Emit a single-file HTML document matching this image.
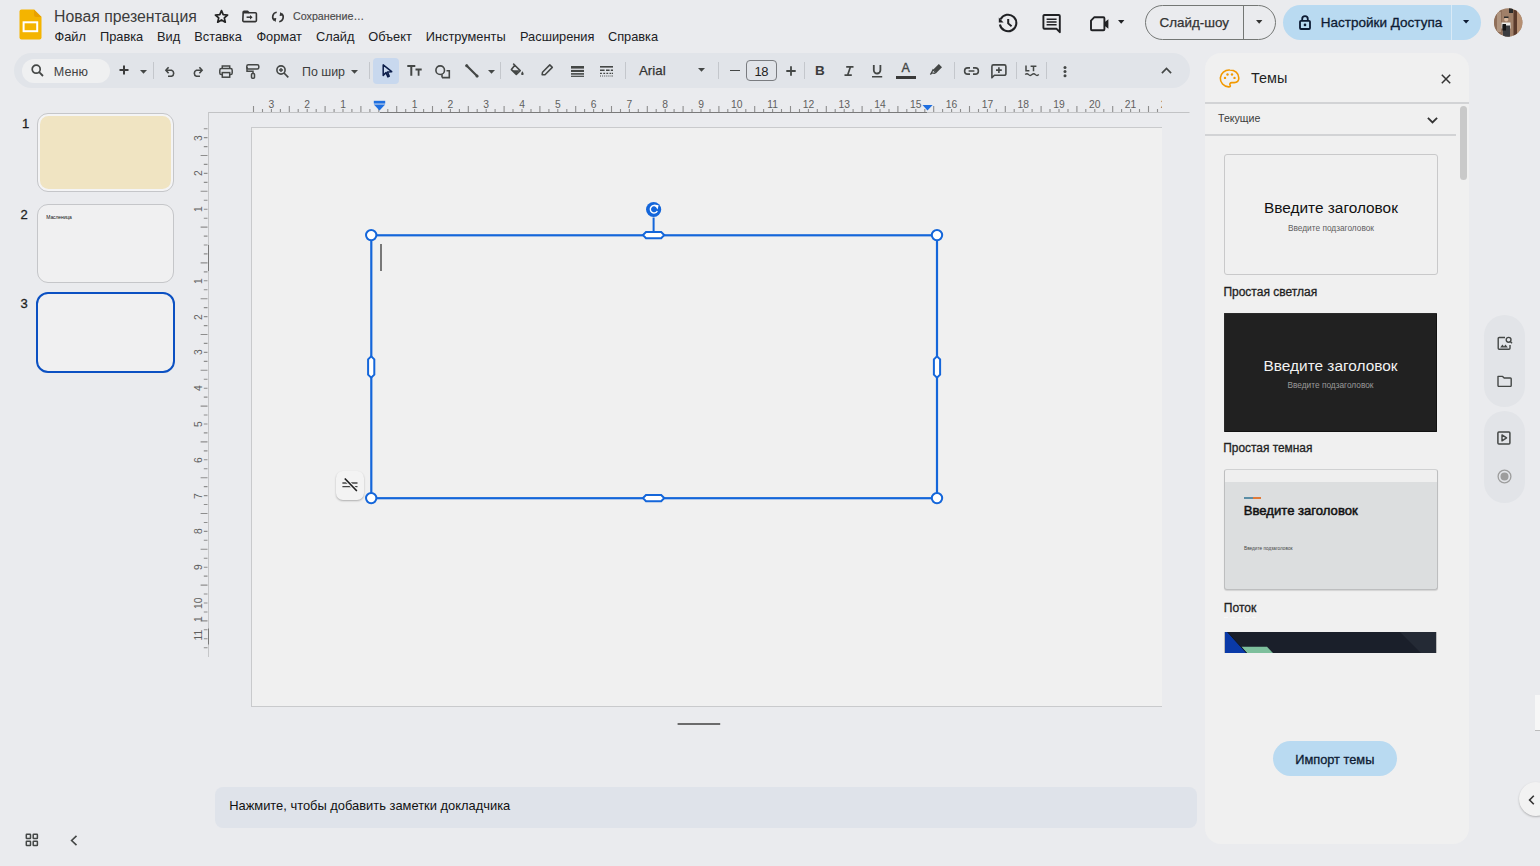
<!DOCTYPE html>
<html><head><meta charset="utf-8">
<style>
*{box-sizing:border-box;margin:0;padding:0}
html,body{width:1540px;height:866px;overflow:hidden}
body{background:#eaebee;font-family:"Liberation Sans",sans-serif;color:#1f1f1f;position:relative}
.a{position:absolute}
.t{position:absolute;line-height:1;white-space:nowrap}
svg{position:absolute;overflow:visible}
.m{-webkit-text-stroke:0.3px currentColor}
.rn{font-size:10.3px;color:#5f5f5f;text-align:center}
</style></head><body>

<!-- ============ TOP BAR ============ -->
<svg style="left:19px;top:9px" width="23" height="31" viewBox="0 0 23 31">
  <path d="M2.5 0.5 H15 L22.5 8 V28.5 Q22.5 30.5 20.5 30.5 H2.5 Q0.5 30.5 0.5 28.5 V2.5 Q0.5 0.5 2.5 0.5Z" fill="#f4b400"/>
  <path d="M15 0.5 L22.5 8 H17 Q15 8 15 6Z" fill="#e8a000"/>
  <rect x="4.6" y="13.3" width="13.6" height="8.9" fill="none" stroke="#fff" stroke-width="2"/>
</svg>
<div class="t" style="left:54px;top:8.9px;font-size:15.8px;color:#3c3c3c">Новая презентация</div>
<!-- star -->
<svg style="left:213.5px;top:8.8px" width="15" height="15" viewBox="0 0 15 15"><path d="M7.5 1.6L9.2 5.6 13.6 6 10.3 8.9 11.3 13.2 7.5 10.9 3.7 13.2 4.7 8.9 1.4 6 5.8 5.6z" fill="none" stroke="#222" stroke-width="1.7" stroke-linejoin="round"/></svg>
<!-- move to folder -->
<svg style="left:242px;top:11px" width="15" height="11" viewBox="0 0 15 11"><path d="M1.2 1.2A0.8 0.8 0 0 1 2 0.4H5.6L7 1.8H13.4A1 1 0 0 1 14.4 2.8V9.6A1 1 0 0 1 13.4 10.6H1.8A1 1 0 0 1 0.8 9.6z" fill="none" stroke="#333" stroke-width="1.6" stroke-linejoin="round"/><path d="M0.9 1H6L7 2.4H0.9z" fill="#333"/><path d="M4.6 6.2H9.2" stroke="#333" stroke-width="1.5"/><path d="M8 3.9L10.6 6.2 8 8.5z" fill="#333"/></svg>
<!-- sync -->
<svg style="left:272px;top:10.6px" width="12" height="12" viewBox="0 0 12 12"><path d="M4.7 1.3A4.6 4.6 0 0 0 2.6 9.6" fill="none" stroke="#333" stroke-width="1.6"/><path d="M0.7 7.6L3.6 10.9 4.3 7z" fill="#333"/><path d="M7.2 10.7A4.6 4.6 0 0 0 9.3 2.4" fill="none" stroke="#333" stroke-width="1.6"/><path d="M11.2 4.4L8.3 1.1 7.6 5z" fill="#333"/></svg>
<div class="t" style="left:293px;top:11.2px;font-size:10.7px;color:#4a4a4a;-webkit-text-stroke:0.15px #4a4a4a">Сохранение…</div>

<div class="t" style="left:54.5px;top:30.8px;font-size:12.8px;color:#202124">Файл</div>
<div class="t" style="left:100px;top:30.8px;font-size:12.8px;color:#202124">Правка</div>
<div class="t" style="left:157px;top:30.8px;font-size:12.8px;color:#202124">Вид</div>
<div class="t" style="left:194.3px;top:30.8px;font-size:12.8px;color:#202124">Вставка</div>
<div class="t" style="left:256.4px;top:30.8px;font-size:12.8px;color:#202124">Формат</div>
<div class="t" style="left:316px;top:30.8px;font-size:12.8px;color:#202124">Слайд</div>
<div class="t" style="left:368.2px;top:30.8px;font-size:12.8px;color:#202124">Объект</div>
<div class="t" style="left:425.8px;top:30.8px;font-size:12.8px;color:#202124">Инструменты</div>
<div class="t" style="left:520px;top:30.8px;font-size:12.8px;color:#202124">Расширения</div>
<div class="t" style="left:607.9px;top:30.8px;font-size:12.8px;color:#202124">Справка</div>

<!-- right top -->
<!-- history -->
<svg style="left:998px;top:12.8px" width="20" height="20" viewBox="0 0 20 20"><path d="M2.6 6.3A8.3 8.3 0 1 1 1.9 11.5" fill="none" stroke="#202124" stroke-width="2"/><path d="M0.8 4.5V9.4H5.6z" fill="#202124"/><path d="M10.2 6V10.4L13.6 13.2" fill="none" stroke="#202124" stroke-width="2"/></svg>
<!-- comments -->
<svg style="left:1042px;top:13.5px" width="20" height="20" viewBox="0 0 20 20"><path d="M2.4 1H16.8A1 1 0 0 1 17.8 2V18.2L14.6 14.8H2.4A1 1 0 0 1 1.4 13.8V2A1 1 0 0 1 2.4 1z" fill="none" stroke="#202124" stroke-width="1.9" stroke-linejoin="round"/><path d="M4.6 5.3H14.6M4.6 8H14.6M4.6 10.7H14.6" stroke="#202124" stroke-width="1.4"/></svg>
<!-- video -->
<svg style="left:1090px;top:15.5px" width="20" height="16" viewBox="0 0 20 16"><path d="M4.4 1.2H13.4A1 1 0 0 1 14.4 2.2V13.3A1 1 0 0 1 13.4 14.3H2A1 1 0 0 1 1 13.3V4.6z" fill="none" stroke="#202124" stroke-width="1.9" stroke-linejoin="round"/><path d="M14.2 6.5L18.4 3.2V12.8L14.2 9.5z" fill="#202124"/></svg>
<svg style="left:1118px;top:20.4px" width="7" height="4" viewBox="0 0 7 4"><path d="M0 0H6.4L3.2 3.7z" fill="#202124"/></svg>
<!-- slideshow -->
<div class="a" style="left:1144.5px;top:5px;width:131px;height:35px;border:1px solid #747775;border-radius:18px"></div>
<div class="a" style="left:1243px;top:5.5px;width:1px;height:34px;background:#747775"></div>
<div class="t" style="left:1159.6px;top:16.3px;font-size:13.4px;color:#333;-webkit-text-stroke:0.25px #333">Слайд-шоу</div>
<svg style="left:1256px;top:20px" width="7" height="4" viewBox="0 0 7 4"><path d="M0 0H6.4L3.2 3.7z" fill="#333"/></svg>
<!-- access -->
<div class="a" style="left:1282.5px;top:5px;width:198px;height:35px;border-radius:18px;background:#b9daf1"></div>
<div class="a" style="left:1450.5px;top:5px;width:1px;height:35px;background:#d9eaf6"></div>
<svg style="left:1299px;top:15px" width="12" height="15" viewBox="0 0 12 15"><rect x="1" y="5.8" width="10" height="8.2" rx="1" fill="none" stroke="#0d1b33" stroke-width="1.8"/><path d="M3.2 5.8V3.9A2.8 2.8 0 0 1 8.8 3.9V5.8" fill="none" stroke="#0d1b33" stroke-width="1.8"/><circle cx="6" cy="9.9" r="1.3" fill="#0d1b33"/></svg>
<div class="t m" style="left:1320.8px;top:15.7px;font-size:13.5px;color:#0d1b33">Настройки Доступа</div>
<svg style="left:1462.5px;top:20.3px" width="7" height="4" viewBox="0 0 7 4"><path d="M0 0H6.2L3.1 3.6z" fill="#0d1b33"/></svg>
<!-- avatar -->
<svg style="left:1494px;top:8px" width="29" height="29" viewBox="0 0 29 29"><defs><clipPath id="av"><circle cx="14.2" cy="14.5" r="14.2"/></clipPath></defs>
<g clip-path="url(#av)">
<rect width="29" height="29" fill="#a08069"/>
<rect x="0" y="0" width="8" height="29" fill="#8f6f5a"/>
<rect x="3" y="4" width="4" height="20" fill="#b09580"/>
<rect x="15" y="0" width="4" height="5" fill="#2a2a2a"/>
<rect x="19.5" y="2" width="3.5" height="27" fill="#5b3b2c"/>
<rect x="23" y="0" width="6" height="29" fill="#b58f72"/>
<circle cx="12.2" cy="11.5" r="2" fill="#d8b9a0"/>
<path d="M10 8.5h4.5v1.6H10z" fill="#2a2a2a"/>
<path d="M7.5 14.5h9v6h-9z" fill="#ecebe8"/>
<path d="M8.5 17.5h7.5V29H9z" fill="#3a3c40"/>
<path d="M8.5 16h3.5v6.5H8.5z" fill="#151515"/>
</g></svg>
<!-- ============ TOOLBAR ============ -->
<div class="a" style="left:14px;top:53px;width:1176px;height:35px;border-radius:18px;background:#e1e4e9"></div>
<div class="a" style="left:22px;top:59px;width:88px;height:24px;border-radius:12px;background:#eff0f1"></div>
<!-- search -->
<svg style="left:31px;top:64px" width="13" height="13" viewBox="0 0 13 13"><circle cx="5.2" cy="5.2" r="4" fill="none" stroke="#444746" stroke-width="1.7"/><path d="M8.2 8.2L12 12" stroke="#444746" stroke-width="1.8"/></svg>
<div class="t" style="left:53.8px;top:65.8px;font-size:12.6px;color:#444">Меню</div>
<!-- plus -->
<svg style="left:119px;top:65px" width="10" height="10" viewBox="0 0 10 10"><path d="M5 0.5V9.5M0.5 5H9.5" stroke="#3c3c3c" stroke-width="2"/></svg>
<svg style="left:140px;top:69.5px" width="7" height="4" viewBox="0 0 7 4"><path d="M0 0H7L3.5 3.8z" fill="#444746"/></svg>
<div class="a" style="left:152.5px;top:62px;width:1px;height:17px;background:#c4c7cc"></div>
<!-- undo -->
<svg style="left:165px;top:66px" width="11" height="11" viewBox="0 0 11 11"><path d="M1.2 4.2H6.6A3.2 3.2 0 0 1 6.6 10.2H3" fill="none" stroke="#444746" stroke-width="1.6"/><path d="M3.6 1.2L0.9 4.2 3.6 7.2" fill="none" stroke="#444746" stroke-width="1.6"/></svg>
<!-- redo -->
<svg style="left:192px;top:66px" width="11" height="11" viewBox="0 0 11 11"><path d="M9.8 4.2H4.4A3.2 3.2 0 0 0 4.4 10.2H8" fill="none" stroke="#444746" stroke-width="1.6"/><path d="M7.4 1.2L10.1 4.2 7.4 7.2" fill="none" stroke="#444746" stroke-width="1.6"/></svg>
<!-- print -->
<svg style="left:219px;top:65px" width="14" height="13" viewBox="0 0 14 13"><path d="M3.3 3.2V0.9H10.7V3.2" fill="none" stroke="#444746" stroke-width="1.5"/><rect x="0.8" y="3.6" width="12.4" height="6" rx="1.6" fill="none" stroke="#444746" stroke-width="1.5"/><rect x="3.3" y="7.6" width="7.4" height="4.6" fill="#e1e4e9" stroke="#444746" stroke-width="1.5"/></svg>
<!-- paint format -->
<svg style="left:246px;top:64px" width="14" height="15" viewBox="0 0 14 15"><rect x="0.8" y="0.8" width="12" height="4.2" rx="1.5" fill="none" stroke="#444746" stroke-width="1.5"/><path d="M1 3V7.3H7V9.6" fill="none" stroke="#444746" stroke-width="1.5"/><rect x="5.5" y="9.6" width="3" height="4.6" rx="1" fill="none" stroke="#444746" stroke-width="1.5"/></svg>
<!-- zoom -->
<svg style="left:276px;top:64.5px" width="13" height="13" viewBox="0 0 13 13"><circle cx="5" cy="5" r="4.1" fill="none" stroke="#444746" stroke-width="1.6"/><path d="M8 8L12.3 12.3" stroke="#444746" stroke-width="1.7"/><path d="M5 3V7M3 5H7" stroke="#444746" stroke-width="1.4"/></svg>
<div class="t" style="left:302px;top:65.7px;font-size:12.4px;color:#3c3c3c">По шир</div>
<svg style="left:351px;top:69.5px" width="7" height="4" viewBox="0 0 7 4"><path d="M0 0H7L3.5 3.8z" fill="#444746"/></svg>
<div class="a" style="left:369px;top:62px;width:1px;height:17px;background:#c4c7cc"></div>
<!-- select -->
<div class="a" style="left:373px;top:58px;width:26px;height:25.5px;border-radius:4px;background:#c8d8ee"></div>
<svg style="left:381.5px;top:64px" width="10" height="14" viewBox="0 0 10 14"><path d="M1.2 0.9V11.4L4 8.6 5.9 12.9 7.3 12.2 5.5 8 9.7 7.7z" fill="none" stroke="#0b1d4a" stroke-width="1.5" stroke-linejoin="round"/></svg>
<!-- Tт -->
<svg style="left:406.5px;top:64.5px" width="15" height="11" viewBox="0 0 15 11"><path d="M0.3 1.1H8.3M4.3 1.1V10.8" stroke="#444746" stroke-width="2"/><path d="M8.5 4.5H14.7M11.6 4.5V10.8" stroke="#444746" stroke-width="1.8"/></svg>
<!-- shapes -->
<svg style="left:435px;top:64.5px" width="16" height="14" viewBox="0 0 16 14"><circle cx="5.2" cy="5.2" r="4.3" fill="none" stroke="#444746" stroke-width="1.6"/><path d="M7 12.6H14.3V5.8H11.5" fill="none" stroke="#444746" stroke-width="1.6"/><path d="M7 9.3V12.6" stroke="#444746" stroke-width="1.6"/></svg>
<!-- line -->
<svg style="left:465px;top:63.5px" width="14" height="14" viewBox="0 0 14 14"><path d="M1.5 1.5L12.3 12.2" stroke="#444746" stroke-width="2.2" stroke-linecap="round"/><circle cx="1.8" cy="1.8" r="1.5" fill="#444746"/><circle cx="12" cy="12" r="1.5" fill="#444746"/></svg>
<svg style="left:487.5px;top:69.5px" width="7" height="4" viewBox="0 0 7 4"><path d="M0 0H7L3.5 3.8z" fill="#444746"/></svg>
<div class="a" style="left:500px;top:62px;width:1px;height:17px;background:#c4c7cc"></div>
<!-- fill -->
<svg style="left:510px;top:62.5px" width="15" height="13" viewBox="0 0 15 13"><path d="M3.2 0.6L4.6 2 " stroke="#444746" stroke-width="1.5"/><path d="M4.8 2.2L10.2 7.6 6.3 11.5 1.4 6.6z" fill="none" stroke="#444746" stroke-width="1.6" stroke-linejoin="round"/><path d="M2 7.2H9.6L6.3 11z" fill="#444746"/><path d="M12.4 8.3C11.6 9.6 11.2 10.2 11.2 10.9A1.2 1.2 0 0 0 13.6 10.9C13.6 10.2 13.2 9.6 12.4 8.3z" fill="#444746"/></svg>
<!-- pencil -->
<svg style="left:541px;top:63.5px" width="13" height="12" viewBox="0 0 13 12"><path d="M1.1 10.8L1.5 8.2 8.8 0.9 11.3 3.4 4 10.7z" fill="none" stroke="#444746" stroke-width="1.5" stroke-linejoin="round"/></svg>
<!-- line weight -->
<svg style="left:571px;top:65.5px" width="13" height="11" viewBox="0 0 13 11"><rect x="0" y="0" width="13" height="2.6" fill="#444746"/><rect x="0" y="3.9" width="13" height="2.1" fill="#444746"/><rect x="0" y="7.1" width="13" height="1.6" fill="#444746"/><rect x="0" y="9.7" width="13" height="1.2" fill="#444746"/></svg>
<!-- dash -->
<svg style="left:600px;top:65.5px" width="13" height="11" viewBox="0 0 13 11"><rect x="0" y="0" width="13" height="1.6" fill="#444746"/><path d="M0 4.2H4.6M6 4.2H9.6M10.8 4.2H13" stroke="#444746" stroke-width="1.4"/><path d="M0 7.3H1.9M3.3 7.3H5.1M6.4 7.3H8.2M9.5 7.3H11.3M12 7.3H13" stroke="#444746" stroke-width="1.3"/><path d="M0 10H1M2.1 10H3.1M4.2 10H5.2M6.3 10H7.3M8.4 10H9.4M10.5 10H11.5M12.2 10H13" stroke="#444746" stroke-width="1.2"/></svg>
<div class="a" style="left:625px;top:62px;width:1px;height:17px;background:#c4c7cc"></div>
<div class="t" style="left:639px;top:63.8px;font-size:13.3px;color:#333;-webkit-text-stroke:0.25px #333">Arial</div>
<svg style="left:698px;top:68.2px" width="7" height="4" viewBox="0 0 7 4"><path d="M0 0H7L3.5 3.8z" fill="#444746"/></svg>
<div class="a" style="left:718px;top:62px;width:1px;height:17px;background:#c4c7cc"></div>
<div class="a" style="left:730px;top:69.6px;width:10px;height:1.8px;background:#444746"></div>
<div class="a" style="left:746px;top:60px;width:30.5px;height:20.5px;border:1px solid #7a7c80;border-radius:4px"></div>
<div class="t" style="left:746px;top:64.8px;width:30.5px;text-align:center;font-size:13px;letter-spacing:-0.6px;color:#222">18</div>
<svg style="left:786px;top:66px" width="10" height="10" viewBox="0 0 10 10"><path d="M5 0.3V9.7M0.3 5H9.7" stroke="#444746" stroke-width="1.8"/></svg>
<div class="a" style="left:804px;top:62px;width:1px;height:17px;background:#c4c7cc"></div>
<div class="t" style="left:815px;top:63.8px;font-size:13.5px;font-weight:700;color:#3c3c3c">B</div>
<svg style="left:844px;top:66px" width="10" height="10" viewBox="0 0 10 10"><path d="M2.2 0.9H9.5M0.5 9.2H7.8M6.4 0.9L3.6 9.2" stroke="#444746" stroke-width="1.7"/></svg>
<svg style="left:872px;top:65px" width="11" height="13" viewBox="0 0 11 13"><path d="M1.8 0V5.2A3.3 3.3 0 0 0 8.4 5.2V0" fill="none" stroke="#444746" stroke-width="1.8"/><rect x="0" y="11" width="10.2" height="1.5" fill="#444746"/></svg>
<div class="t" style="left:901.5px;top:62.3px;font-size:12.5px;color:#444746;-webkit-text-stroke:0.35px #444746">A</div>
<div class="a" style="left:896px;top:76px;width:20px;height:3px;background:#3a3a3a"></div>
<!-- highlighter -->
<svg style="left:930px;top:62.5px" width="13" height="12" viewBox="0 0 13 12"><path d="M3.3 6.5L8.8 1 12 4.2 6.5 9.7z" fill="#444746"/><path d="M3 6.8L5.8 9.6 4.4 10.4 1.5 9.8z" fill="none" stroke="#444746" stroke-width="1.3"/><path d="M0.3 11.5L2 9.8" stroke="#444746" stroke-width="1.3"/></svg>
<div class="a" style="left:954px;top:62px;width:1px;height:17px;background:#c4c7cc"></div>
<!-- link -->
<svg style="left:963.5px;top:67.3px" width="15" height="8" viewBox="0 0 15 8"><path d="M6 0.9H3.7A3.1 3.1 0 0 0 3.7 7.1H6M9 0.9H11.3A3.1 3.1 0 0 1 11.3 7.1H9M4.6 4H10.4" fill="none" stroke="#444746" stroke-width="1.6"/></svg>
<!-- add comment -->
<svg style="left:991px;top:63.5px" width="16" height="15" viewBox="0 0 16 15"><path d="M0.9 13.8V2.4A1.5 1.5 0 0 1 2.4 0.9H13.4A1.5 1.5 0 0 1 14.9 2.4V9.8A1.5 1.5 0 0 1 13.4 11.3H3.4z" fill="none" stroke="#444746" stroke-width="1.6" stroke-linejoin="round"/><path d="M7.9 3.2V9M5 6.1H10.8" stroke="#444746" stroke-width="1.6"/></svg>
<div class="a" style="left:1015.5px;top:62px;width:1px;height:17px;background:#c4c7cc"></div>
<!-- LT spell -->
<svg style="left:1025px;top:65px" width="14" height="12" viewBox="0 0 14 12"><path d="M1 0.4V5.8H4.4M5.6 1.2H11.4M8.5 1.2V6.2" fill="none" stroke="#444746" stroke-width="1.5"/><path d="M0.2 9.6Q2 7.8 3.6 9.6T7 9.6 10.4 9.6 13.8 9.6" fill="none" stroke="#444746" stroke-width="1.4"/></svg>
<div class="a" style="left:1046.3px;top:62px;width:1px;height:17px;background:#c4c7cc"></div>
<!-- more -->
<svg style="left:1062.5px;top:65.5px" width="4" height="12" viewBox="0 0 4 12"><circle cx="2" cy="1.6" r="1.5" fill="#444746"/><circle cx="2" cy="5.6" r="1.5" fill="#444746"/><circle cx="2" cy="9.8" r="1.5" fill="#444746"/></svg>
<!-- chevron up -->
<svg style="left:1160.5px;top:67px" width="11" height="7" viewBox="0 0 11 7"><path d="M0.9 6.1L5.5 1.5 10.1 6.1" fill="none" stroke="#444746" stroke-width="1.7"/></svg>


<!-- ============ FILMSTRIP ============ -->
<div class="t m" style="left:22px;top:116.8px;font-size:13px;color:#1f1f1f;-webkit-text-stroke:0.3px #1f1f1f">1</div>
<div class="a" style="left:37.3px;top:113.2px;width:136.3px;height:79px;border:1px solid #c5c6c9;border-radius:11px;background:#f4f4f5"></div>
<div class="a" style="left:40.3px;top:116.2px;width:130.3px;height:73px;border-radius:8.5px;background:#f0e4c2"></div>
<div class="t m" style="left:20.6px;top:207.5px;font-size:13px;color:#1f1f1f;-webkit-text-stroke:0.3px #1f1f1f">2</div>
<div class="a" style="left:37.3px;top:203.5px;width:136.3px;height:79px;border:1px solid #c5c6c9;border-radius:11px;background:#f0f0f1"></div>
<div class="t" style="left:46.3px;top:215.4px;font-size:5px;color:#111;letter-spacing:-0.1px">Масленица</div>
<div class="t m" style="left:20.6px;top:297px;font-size:13px;color:#1f1f1f;-webkit-text-stroke:0.3px #1f1f1f">3</div>
<div class="a" style="left:36.3px;top:292.4px;width:138.3px;height:80.8px;border:2.5px solid #0b50c2;border-radius:12px;background:#f0f0f1"></div>


<!-- ============ CANVAS ============ -->
<div class="a" style="left:251px;top:127px;width:911px;height:580px;background:#f0f0f0;border:1px solid #c9cacc;border-right:none"></div>
<svg style="left:0;top:0" width="1540" height="866" viewBox="0 0 1540 866">
<path d="M208 112.5H1189.5" stroke="#c2c3c5" stroke-width="1"/>
<path d="M380 112.5H927" stroke="#7a7a7a" stroke-width="1"/>
<path d="M208.5 112V657" stroke="#c6c7c9" stroke-width="1"/>
<path d="M208.5 245V271M208.5 628.5V644.5" stroke="#7a7a7a" stroke-width="1"/>
<path d="M253.5 106V112M262.5 109V112M271.4 109V112M280.4 109V112M289.3 106V112M298.2 109V112M307.2 109V112M316.2 109V112M325.1 106V112M334.1 109V112M343.0 109V112M351.9 109V112M360.9 106V112M369.9 109V112M378.8 109V112M387.8 109V112M396.7 106V112M405.7 109V112M414.6 109V112M423.6 109V112M432.5 106V112M441.4 109V112M450.4 109V112M459.4 109V112M468.3 106V112M477.2 109V112M486.2 109V112M495.1 109V112M504.1 106V112M513.0 109V112M522.0 109V112M531.0 109V112M539.9 106V112M548.9 109V112M557.8 109V112M566.8 109V112M575.7 106V112M584.6 109V112M593.6 109V112M602.5 109V112M611.5 106V112M620.5 109V112M629.4 109V112M638.3 109V112M647.3 106V112M656.2 109V112M665.2 109V112M674.1 109V112M683.1 106V112M692.0 109V112M701.0 109V112M710.0 109V112M718.9 106V112M727.8 109V112M736.8 109V112M745.8 109V112M754.7 106V112M763.6 109V112M772.6 109V112M781.5 109V112M790.5 106V112M799.5 109V112M808.4 109V112M817.3 109V112M826.3 106V112M835.2 109V112M844.2 109V112M853.1 109V112M862.1 106V112M871.0 109V112M880.0 109V112M889.0 109V112M897.9 106V112M906.8 109V112M915.8 109V112M924.8 109V112M933.7 106V112M942.6 109V112M951.6 109V112M960.5 109V112M969.5 106V112M978.5 109V112M987.4 109V112M996.3 109V112M1005.3 106V112M1014.2 109V112M1023.2 109V112M1032.1 109V112M1041.1 106V112M1050.0 109V112M1059.0 109V112M1068.0 109V112M1076.9 106V112M1085.8 109V112M1094.8 109V112M1103.8 109V112M1112.7 106V112M1121.6 109V112M1130.6 109V112M1139.5 109V112M1148.5 106V112M1157.5 109V112" stroke="#8e8e8e" stroke-width="1.1"/>
<path d="M203.8 128.7H207.5M203.8 137.6H207.5M203.8 146.6H207.5M200.6 155.5H207.5M203.8 164.4H207.5M203.8 173.4H207.5M203.8 182.4H207.5M200.6 191.3H207.5M203.8 200.2H207.5M203.8 209.2H207.5M203.8 218.2H207.5M200.6 227.1H207.5M203.8 236.1H207.5M203.8 245.0H207.5M203.8 253.9H207.5M200.6 262.9H207.5M203.8 271.9H207.5M203.8 280.8H207.5M203.8 289.8H207.5M200.6 298.7H207.5M203.8 307.6H207.5M203.8 316.6H207.5M203.8 325.6H207.5M200.6 334.5H207.5M203.8 343.4H207.5M203.8 352.4H207.5M203.8 361.4H207.5M200.6 370.3H207.5M203.8 379.2H207.5M203.8 388.2H207.5M203.8 397.1H207.5M200.6 406.1H207.5M203.8 415.0H207.5M203.8 424.0H207.5M203.8 432.9H207.5M200.6 441.9H207.5M203.8 450.9H207.5M203.8 459.8H207.5M203.8 468.8H207.5M200.6 477.7H207.5M203.8 486.6H207.5M203.8 495.6H207.5M203.8 504.5H207.5M200.6 513.5H207.5M203.8 522.5H207.5M203.8 531.4H207.5M203.8 540.3H207.5M200.6 549.3H207.5M203.8 558.2H207.5M203.8 567.2H207.5M203.8 576.1H207.5M200.6 585.1H207.5M203.8 594.0H207.5M203.8 603.0H207.5M203.8 612.0H207.5M200.6 620.9H207.5M203.8 629.8H207.5M203.8 638.8H207.5M203.8 647.8H207.5" stroke="#8e8e8e" stroke-width="1.1"/>
<path d="M373.8 100.8H385.2V103.6H373.8z" fill="#1f6fe0"/>
<path d="M373.8 104.6H385.2L379.5 110.4z" fill="#1f6fe0"/>
<path d="M922.5 105H932.6L927.5 110.4z" fill="#1f6fe0"/>
</svg>
<div class="a" style="left:0;top:0;width:1162px;height:120px;overflow:hidden"><div class="t rn" style="left:256.4px;top:100.4px;width:30px">3</div><div class="t rn" style="left:292.2px;top:100.4px;width:30px">2</div><div class="t rn" style="left:328.0px;top:100.4px;width:30px">1</div><div class="t rn" style="left:399.6px;top:100.4px;width:30px">1</div><div class="t rn" style="left:435.4px;top:100.4px;width:30px">2</div><div class="t rn" style="left:471.2px;top:100.4px;width:30px">3</div><div class="t rn" style="left:507.0px;top:100.4px;width:30px">4</div><div class="t rn" style="left:542.8px;top:100.4px;width:30px">5</div><div class="t rn" style="left:578.6px;top:100.4px;width:30px">6</div><div class="t rn" style="left:614.4px;top:100.4px;width:30px">7</div><div class="t rn" style="left:650.2px;top:100.4px;width:30px">8</div><div class="t rn" style="left:686.0px;top:100.4px;width:30px">9</div><div class="t rn" style="left:721.8px;top:100.4px;width:30px">10</div><div class="t rn" style="left:757.6px;top:100.4px;width:30px">11</div><div class="t rn" style="left:793.4px;top:100.4px;width:30px">12</div><div class="t rn" style="left:829.2px;top:100.4px;width:30px">13</div><div class="t rn" style="left:865.0px;top:100.4px;width:30px">14</div><div class="t rn" style="left:900.8px;top:100.4px;width:30px">15</div><div class="t rn" style="left:936.6px;top:100.4px;width:30px">16</div><div class="t rn" style="left:972.4px;top:100.4px;width:30px">17</div><div class="t rn" style="left:1008.2px;top:100.4px;width:30px">18</div><div class="t rn" style="left:1044.0px;top:100.4px;width:30px">19</div><div class="t rn" style="left:1079.8px;top:100.4px;width:30px">20</div><div class="t rn" style="left:1115.6px;top:100.4px;width:30px">21</div><div class="t rn" style="left:1151.4px;top:100.4px;width:30px">22</div></div>
<div class="t rn" style="left:183.5px;top:132.6px;width:30px;transform:rotate(-90deg)">3</div><div class="t rn" style="left:183.5px;top:168.4px;width:30px;transform:rotate(-90deg)">2</div><div class="t rn" style="left:183.5px;top:204.2px;width:30px;transform:rotate(-90deg)">1</div><div class="t rn" style="left:183.5px;top:275.8px;width:30px;transform:rotate(-90deg)">1</div><div class="t rn" style="left:183.5px;top:311.6px;width:30px;transform:rotate(-90deg)">2</div><div class="t rn" style="left:183.5px;top:347.4px;width:30px;transform:rotate(-90deg)">3</div><div class="t rn" style="left:183.5px;top:383.2px;width:30px;transform:rotate(-90deg)">4</div><div class="t rn" style="left:183.5px;top:419.0px;width:30px;transform:rotate(-90deg)">5</div><div class="t rn" style="left:183.5px;top:454.8px;width:30px;transform:rotate(-90deg)">6</div><div class="t rn" style="left:183.5px;top:490.6px;width:30px;transform:rotate(-90deg)">7</div><div class="t rn" style="left:183.5px;top:526.4px;width:30px;transform:rotate(-90deg)">8</div><div class="t rn" style="left:183.5px;top:562.2px;width:30px;transform:rotate(-90deg)">9</div><div class="t rn" style="left:183.5px;top:598.0px;width:30px;transform:rotate(-90deg)">10</div><div class="t rn" style="left:183.5px;top:630px;width:30px;transform:rotate(-90deg)">11</div><div class="t rn" style="left:183.5px;top:613.8px;width:30px;transform:rotate(-90deg)">1</div>
<!-- text box -->
<svg style="left:0;top:0" width="1540" height="866" viewBox="0 0 1540 866">
<rect x="371.3" y="235.3" width="565.7" height="262.9" fill="none" stroke="#1466da" stroke-width="2.2"/>
<path d="M653.6 217.5V233" stroke="#1466da" stroke-width="2"/>
<circle cx="653.6" cy="209.5" r="7.6" fill="#1466da"/>
<path d="M656.6 206.6A3.7 3.7 0 1 0 657.3 211" fill="none" stroke="#fff" stroke-width="1.4"/>
<path d="M654.2 204.6L658.6 205.2 657.6 209.6z" fill="#fff"/>
<g fill="#fff" stroke="#1466da" stroke-width="2">
<circle cx="371.2" cy="235.1" r="5.2"/><circle cx="937" cy="235.1" r="5.2"/>
<circle cx="371.2" cy="498.1" r="5.2"/><circle cx="937" cy="498.1" r="5.2"/>
<path d="M646 232H661.2L664.2 235.1 661.2 238.2H646L643 235.1z"/>
<path d="M646 495H661.2L664.2 498.1 661.2 501.2H646L643 498.1z"/>
<path d="M368.1 359.4V374.6L371.2 377.6 374.3 374.6V359.4L371.2 356.4z"/>
<path d="M933.9 359.4V374.6L937 377.6 940.1 374.6V359.4L937 356.4z"/>
</g>
<path d="M381 244V271" stroke="#5a5a5a" stroke-width="1.6"/>
<path d="M677.6 724H720.2" stroke="#6b6b6b" stroke-width="2"/>
</svg>
<div class="a" style="left:335.7px;top:471.3px;width:28.6px;height:28.7px;border-radius:7px;background:#f3f3f3;box-shadow:0 1px 2px rgba(0,0,0,.28)"></div>
<svg style="left:342px;top:478px" width="16" height="14" viewBox="0 0 16 14"><path d="M0.4 5H15.5M0.4 8.6H15.5" stroke="#444" stroke-width="1.3"/><path d="M3.3 1L14.4 12.5" stroke="#f3f3f3" stroke-width="3.6"/><path d="M3.3 1L14.4 12.5" stroke="#1f1f1f" stroke-width="1.7" stroke-linecap="round"/></svg>
<!-- notes -->
<div class="a" style="left:215px;top:786.7px;width:981.7px;height:41.5px;border-radius:8px;background:#dfe3ea"></div>
<div class="t" style="left:229.2px;top:799.5px;font-size:12.9px;color:#111">Нажмите, чтобы добавить заметки докладчика</div>
<!-- bottom left -->
<svg style="left:25px;top:832.5px" width="14" height="14" viewBox="0 0 14 14"><g fill="none" stroke="#444746" stroke-width="1.5"><rect x="1.3" y="1.3" width="4.2" height="4.2" rx=".5"/><rect x="8.2" y="1.3" width="4.2" height="4.2" rx=".5"/><rect x="1.3" y="8.2" width="4.2" height="4.2" rx=".5"/><rect x="8.2" y="8.2" width="4.2" height="4.2" rx=".5"/></g></svg>
<svg style="left:70px;top:834.5px" width="8" height="11" viewBox="0 0 8 11"><path d="M6.5 0.8L1.6 5.5 6.5 10.2" fill="none" stroke="#444746" stroke-width="1.6"/></svg>


<!-- ============ PANEL ============ -->
<div class="a" style="left:1204.5px;top:52.6px;width:264.5px;height:791px;border-radius:16px;background:#f0f0f0"></div>
<svg style="left:1220px;top:68.5px" width="20" height="19" viewBox="0 0 20 19"><path d="M9.8 1A8.8 8.4 0 0 0 8.6 17.9C10.2 18 10.8 17.1 10.1 16.2 9.3 15.2 10.2 13.5 11.9 13.6H14.2C17 13.6 18.8 11.6 18.8 9 18.8 4.2 14.8 1 9.8 1z" fill="none" stroke="#f29900" stroke-width="1.6"/><circle cx="7.5" cy="5.5" r="1.2" fill="#f29900"/><circle cx="12" cy="5.5" r="1.2" fill="#f29900"/><circle cx="5" cy="8.9" r="1.2" fill="#f29900"/><circle cx="14.5" cy="8.9" r="1.2" fill="#f29900"/></svg>
<div class="t" style="left:1251px;top:70.5px;font-size:14.4px;color:#1f1f1f">Темы</div>
<svg style="left:1440.5px;top:73.5px" width="10" height="10" viewBox="0 0 10 10"><path d="M0.8 0.8L9.2 9.2M9.2 0.8L0.8 9.2" stroke="#333" stroke-width="1.5"/></svg>
<div class="a" style="left:1204.5px;top:102px;width:264.5px;height:1.5px;background:#d2d3d5"></div>
<div class="t" style="left:1218px;top:112.5px;font-size:10.6px;color:#3c3c3c">Текущие</div>
<svg style="left:1427px;top:116.5px" width="11" height="7" viewBox="0 0 11 7"><path d="M0.9 0.9L5.5 5.5 10.1 0.9" fill="none" stroke="#333" stroke-width="1.8"/></svg>
<div class="a" style="left:1204.5px;top:134px;width:251.5px;height:1.5px;background:#d2d3d5"></div>
<div class="a" style="left:1459.5px;top:106px;width:7px;height:73.5px;border-radius:3.5px;background:#c9c9c9"></div>

<!-- light -->
<div class="a" style="left:1223.5px;top:153.5px;width:214px;height:121px;border:1px solid #c9c9ca;border-radius:3px;background:#f0f0f0"></div>
<div class="t" style="left:1264px;top:200.2px;font-size:15.4px;color:#111">Введите заголовок</div>
<div class="t" style="left:1288px;top:223.7px;font-size:8.3px;color:#5f5f5f">Введите подзаголовок</div>
<div class="t m" style="left:1223.4px;top:285.7px;font-size:12px;color:#1f1f1f">Простая светлая</div>
<!-- dark -->
<div class="a" style="left:1223.5px;top:312.5px;width:213px;height:119px;border:1px solid #121212;border-top-color:#2a2a2a;border-left-color:#2a2a2a;border-radius:1px;background:#212121"></div>
<div class="t" style="left:1263.6px;top:357.9px;font-size:15.4px;color:#f2f2f2">Введите заголовок</div>
<div class="t" style="left:1287.5px;top:381.3px;font-size:8.3px;color:#9a9a9a">Введите подзаголовок</div>
<div class="t m" style="left:1223.3px;top:443.2px;font-size:11.9px;color:#1f1f1f">Простая темная</div>
<!-- flow -->
<div class="a" style="left:1223.5px;top:469px;width:214px;height:121px;border:1px solid #bdbebf;border-top-color:#d0d1d2;border-radius:3px;background:#dcdedf;overflow:hidden;box-shadow:0 1px 1px rgba(0,0,0,.12)"><div class="a" style="left:0;top:0;width:214px;height:12px;background:#efefef"></div></div>
<div class="a" style="left:1244px;top:497px;width:8.5px;height:2px;background:#5b8ea6"></div>
<div class="a" style="left:1252.5px;top:497px;width:8.8px;height:2px;background:#e07a3a"></div>
<div class="t m" style="left:1243.8px;top:503.6px;font-size:13.1px;color:#111;-webkit-text-stroke:0.5px #111">Введите заголовок</div>
<div class="t" style="left:1244px;top:547.3px;font-size:4.7px;color:#444">Введите подзаголовок</div>
<div class="t m" style="left:1223.8px;top:601.6px;font-size:12.1px;color:#1f1f1f">Поток</div>
<div class="a" style="left:1224px;top:617px;width:33px;height:1px;background:repeating-linear-gradient(90deg,#fafafa 0 4px,transparent 4px 7px);opacity:.7"></div>
<!-- 4th -->
<div class="a" style="left:1223.8px;top:632px;width:213.5px;height:21px;background:#1a1f2a;overflow:hidden;border-left:1px solid #bbb;border-right:1px solid #bbb">
  <svg style="left:0;top:0" width="214" height="21" viewBox="0 0 214 21"><path d="M0 0H2.5L21.5 21H0z" fill="#0a3aa8"/><path d="M16.5 14.8H42L48 21H22z" fill="#7dbf9c"/><path d="M2.5 0L21.5 21" stroke="#101520" stroke-width="0.9"/><path d="M175 0H214V21H196z" fill="#242a35"/></svg>
</div>

<!-- import -->
<div class="a" style="left:1273px;top:741.3px;width:123.6px;height:34.7px;border-radius:17.5px;background:#b9daf1"></div>
<div class="t m" style="left:1273px;top:753.5px;width:123.6px;text-align:center;font-size:12.8px;color:#0d1b33">Импорт темы</div>

<!-- side rail -->
<div class="a" style="left:1484px;top:315.2px;width:41.4px;height:91.5px;border-radius:20.7px;background:#e2e4e8"></div>
<div class="a" style="left:1484px;top:410.5px;width:41.4px;height:92.7px;border-radius:20.7px;background:#e2e4e8"></div>
<svg style="left:1497px;top:336px" width="16" height="14" viewBox="0 0 16 14"><path d="M8 1.5H2.2A1 1 0 0 0 1.2 2.5V12.3A1 1 0 0 0 2.2 13.3H12A1 1 0 0 0 13 12.3V9" fill="none" stroke="#444746" stroke-width="1.4"/><circle cx="11.6" cy="3.8" r="2.4" fill="none" stroke="#444746" stroke-width="1.4"/><path d="M13.3 5.5L15 7.2" stroke="#444746" stroke-width="1.4"/><path d="M3.2 11.4L5.4 8.5 7 10.4 8.5 8.6 10.8 11.4z" fill="#444746"/></svg>
<svg style="left:1497px;top:375px" width="15" height="12" viewBox="0 0 15 12"><path d="M1 1.4H5.6L7.2 3H13.4A0.8 0.8 0 0 1 14.2 3.8V10.6A0.8 0.8 0 0 1 13.4 11.4H1.8A0.8 0.8 0 0 1 1 10.6z" fill="none" stroke="#444746" stroke-width="1.4" stroke-linejoin="round"/></svg>
<svg style="left:1497px;top:431px" width="14" height="14" viewBox="0 0 14 14"><rect x="0.9" y="0.9" width="12" height="12" rx="1" fill="none" stroke="#444746" stroke-width="1.5"/><path d="M5 3.9V9.9L9.6 6.9z" fill="none" stroke="#444746" stroke-width="1.4" stroke-linejoin="round"/></svg>
<svg style="left:1496.5px;top:469px" width="15" height="15" viewBox="0 0 15 15"><circle cx="7.5" cy="7.5" r="6.4" fill="none" stroke="#9d9d9d" stroke-width="1.3"/><circle cx="7.5" cy="7.5" r="4" fill="#9d9d9d"/></svg>
<!-- edge bits -->
<div class="a" style="left:1535px;top:694.5px;width:5px;height:36.3px;background:#f7f7f7;border-bottom:1px solid #bbb"></div>
<div class="a" style="left:1519px;top:782px;width:34px;height:34px;border-radius:50%;background:#f2f2f2;box-shadow:0 1px 2px rgba(0,0,0,.25)"></div>
<svg style="left:1528px;top:795px" width="7" height="10" viewBox="0 0 7 10"><path d="M5.8 0.8L1.6 5 5.8 9.2" fill="none" stroke="#333" stroke-width="1.6"/></svg>


</body></html>
